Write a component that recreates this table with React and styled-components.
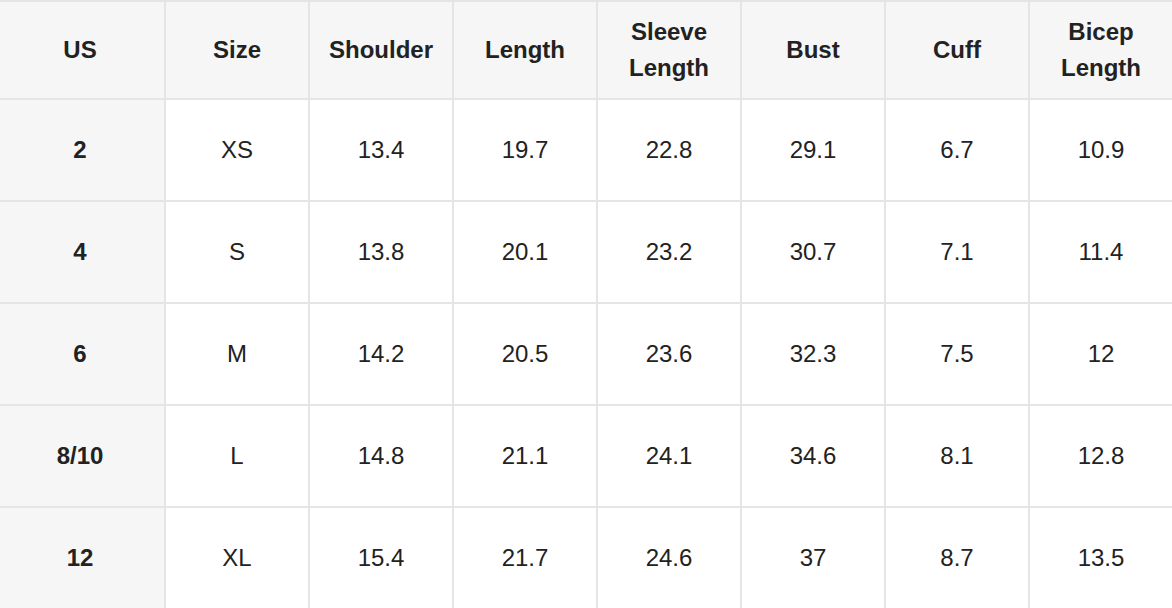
import React from "react";
import styled, { createGlobalStyle } from "styled-components";

const GlobalStyle = createGlobalStyle`
  html, body {
    margin: 0;
    padding: 0;
    background: #ffffff;
  }
  body {
    font-family: "Liberation Sans", Arial, Helvetica, sans-serif;
    color: #222222;
  }
`;

const columns = ["US", "Size", "Shoulder", "Length", "Sleeve Length", "Bust", "Cuff", "Bicep Length"];

const rows = [
  ["2", "XS", "13.4", "19.7", "22.8", "29.1", "6.7", "10.9"],
  ["4", "S", "13.8", "20.1", "23.2", "30.7", "7.1", "11.4"],
  ["6", "M", "14.2", "20.5", "23.6", "32.3", "7.5", "12"],
  ["8/10", "L", "14.8", "21.1", "24.1", "34.6", "8.1", "12.8"],
  ["12", "XL", "15.4", "21.7", "24.6", "37", "8.7", "13.5"],
];

export default function App() {
  return (
    <>
      <GlobalStyle />
      <SizeGrid>
        {columns.map((label, i) => (
          <HeadCell key={label} $first={i === 0}>
            {label}
          </HeadCell>
        ))}
        {rows.map((row) =>
          row.map((value, i) =>
            i === 0 ? (
              <HeadCell key={row[0] + i} $first>
                {value}
              </HeadCell>
            ) : (
              <Cell key={row[0] + i}>{value}</Cell>
            )
          )
        )}
      </SizeGrid>
    </>
  );
}

const SizeGrid = styled.div`
  display: grid;
  grid-template-columns: 164px repeat(7, 142px);
  grid-template-rows: 96px repeat(5, 100px);
  gap: 2px;
  padding-top: 2px;
  width: 1172px;
  background: #e5e5e5;
`;

const Cell = styled.div`
  display: flex;
  align-items: center;
  justify-content: center;
  padding: 0 ${(p) => (p.$first ? "14px 0 10px" : "10px")};
  text-align: center;
  font-size: 24px;
  line-height: 36px;
  background: #ffffff;
`;

const HeadCell = styled(Cell)`
  font-weight: 700;
  background: #f6f6f6;
`;
